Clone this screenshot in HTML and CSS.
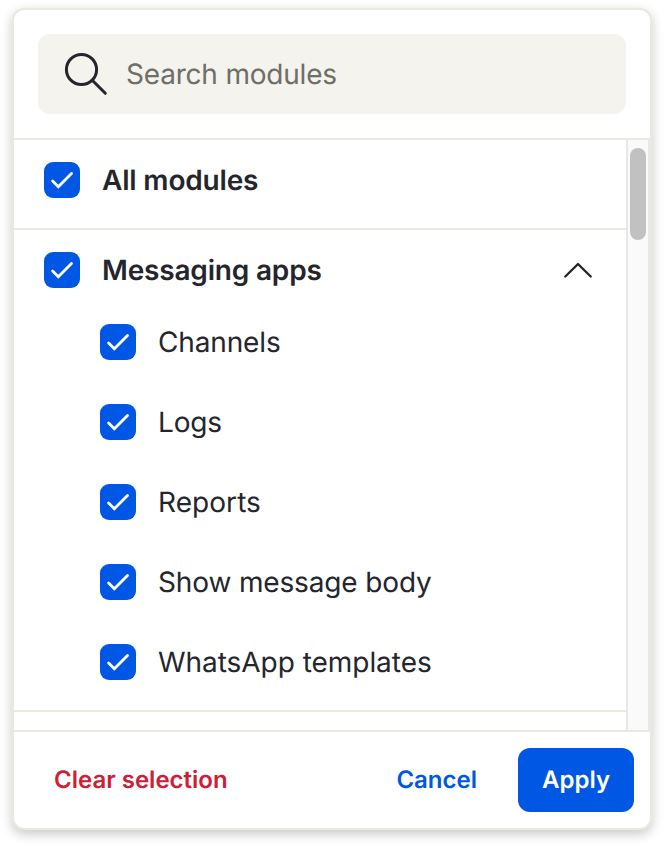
FILE: index.html
```html
<!DOCTYPE html>
<html lang="en">
<head>
<meta charset="utf-8">
<title>Modules</title>
<link rel="stylesheet" href="styles.css">
</head>
<body>
<svg width="0" height="0" class="defs"><symbol id="check" viewBox="0 0 36 36"><path d="M8.6 19.1 14.3 24.7 27.5 11.6" fill="none" stroke="#fff" stroke-width="2.8" stroke-linecap="round"/></symbol></svg>
<div class="panel">
  <div class="search-area">
    <div class="search">
      <svg width="44" height="44" viewBox="0 0 44 44" fill="none" stroke="#25262d" stroke-width="3" stroke-linecap="round"><circle cx="17.5" cy="17.5" r="15.1"/><path d="M28.5 28.5 41.3 41.3"/></svg>
      <span>Search modules</span>
    </div>
  </div>
  <div class="body">
    <div class="list">
      <div class="row all"><svg class="box"><use href="#check"/></svg><span>All modules</span></div>
      <div class="group">
        <div class="row head"><svg class="box"><use href="#check"/></svg><span>Messaging apps</span>
          <svg class="chevron" width="30" height="18" viewBox="0 0 30 18"><path d="M2.3 15.5 15 3 27.7 15.5" fill="none" stroke="#25262d" stroke-width="2.4" stroke-linecap="round" stroke-linejoin="round"/></svg>
        </div>
        <div class="row child"><svg class="box"><use href="#check"/></svg><span>Channels</span></div>
        <div class="row child"><svg class="box"><use href="#check"/></svg><span>Logs</span></div>
        <div class="row child"><svg class="box"><use href="#check"/></svg><span class="reports">Reports</span></div>
        <div class="row child"><svg class="box"><use href="#check"/></svg><span>Show message body</span></div>
        <div class="row child"><svg class="box"><use href="#check"/></svg><span class="templates">WhatsApp templates</span></div>
      </div>
    </div>
    <div class="track"><div class="thumb"></div></div>
  </div>
  <div class="footer">
    <span class="clear">Clear selection</span>
    <span class="cancel">Cancel</span>
    <span class="apply">Apply</span>
  </div>
</div>
</body>
</html>
```
FILE: styles.css
```css
* { box-sizing: border-box; }
body { display: flow-root; height: 846px; margin: 0; background: #fff; font-family: Inter, sans-serif; color: #25262d; text-rendering: geometricPrecision; }
.defs { display: block; }
.panel { display: flex; flex-direction: column; width: 640px; height: 822px; margin: 8px 0 0 12px; border: 2px solid #e8e9df; border-radius: 12px; background: #fff; box-shadow: 0 4px 12px rgba(0,0,0,.22); overflow: hidden; }
.search-area { flex: none; height: 130px; padding: 24px; border-bottom: 2px solid #e9eae0; }
.search { display: flex; align-items: center; height: 80px; padding-left: 26px; gap: 18px; border-radius: 12px; background: #f4f3ee; color: #6f6e69; font-size: 28px; font-weight: 370; letter-spacing: -.2px; }
.body { display: flex; flex: none; height: 590px; }
.list { width: 612px; overflow: hidden; }
.row { display: flex; align-items: center; gap: 22px; font-size: 28px; letter-spacing: -.18px; }
.box { flex: none; width: 36px; height: 36px; border-radius: 9px; background: #0057e3; }
.all, .head { padding-left: 30px; font-weight: 600; }
.all { height: 90px; padding-bottom: 8px; border-bottom: 2px solid #e9eae0; }
.group { height: 482px; border-bottom: 2px solid #e9eae0; }
.head { height: 80px; }
.child { height: 80px; padding: 0 0 16px 86px; font-weight: 370; letter-spacing: -.14px; }
.reports { letter-spacing: .06px; }
.templates { letter-spacing: -.04px; }
.chevron { margin-left: auto; margin-right: 33px; }
.track { width: 24px; padding: 8px 2px; border: solid #e8e8e8; border-width: 0 2px; background: #fafafa; }
.thumb { width: 16px; height: 92px; margin-left: 0; border-radius: 8px; background: #c1c1c1; }
.footer { display: flex; align-items: center; height: 98px; padding: 0 16px 0 40px; border-top: 2px solid #e9eae0; font-size: 24px; font-weight: 600; }
.clear, .cancel { padding-bottom: 2px; }
.clear { color: #cc2036; }
.cancel { margin-left: auto; color: #0057e3; }
.apply { display: flex; align-items: center; justify-content: center; width: 116px; height: 64px; padding-bottom: 2px; margin-left: 41px; border-radius: 12px; background: #0057e3; color: #fff; }
```
